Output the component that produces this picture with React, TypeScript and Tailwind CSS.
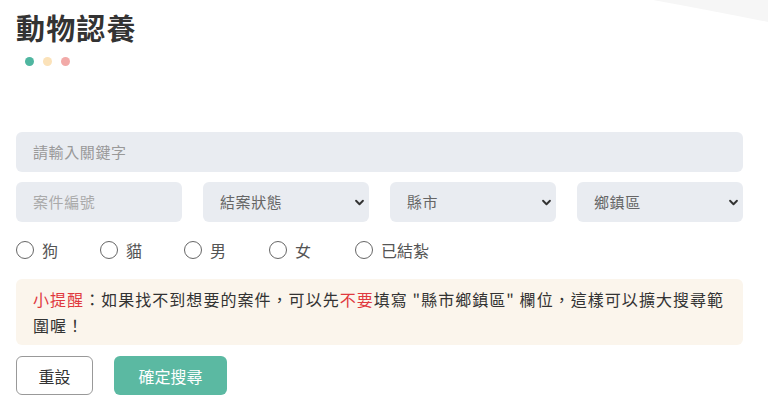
import React from "react";

const font = { fontFamily: '"Noto Sans CJK TC", "Noto Sans", sans-serif' };

function Chevron() {
  return (
    <svg width="11" height="11" viewBox="0 0 16 16" className="shrink-0">
      <path d="M3 5.5l5 5 5-5" fill="none" stroke="#333" strokeWidth="2.8" strokeLinecap="round" strokeLinejoin="round" />
    </svg>
  );
}

function SelectBox({ label }: { label: string }) {
  return (
    <div className="h-[40px] rounded-[6px] bg-[#e9ecf1] flex items-center justify-between pl-[17px] pr-[4px]">
      <span className="text-[15px] text-[#666] tracking-[0.04em]">{label}</span>
      <Chevron />
    </div>
  );
}

function Radio({ label }: { label: string }) {
  return (
    <label className="flex items-center gap-[8px]">
      <span className="w-[18px] h-[18px] rounded-full border-[1.5px] border-[#666] bg-white" />
      <span className="text-[16px] text-[#555]">{label}</span>
    </label>
  );
}

export default function App() {
  return (
    <div className="relative w-[768px] h-[411px] bg-white overflow-hidden" style={font}>
      <svg className="absolute top-0 right-0" width="115" height="26" viewBox="0 0 115 26">
        <path d="M0 0 Q55 10 115 22 L115 0 Z" fill="#f6f6f6" />
      </svg>
      <div className="relative px-[16px] pt-[8px]">
        <h1 className="text-[29px] font-bold text-[#333] leading-[38px] tracking-[0.04em]">動物認養</h1>
        <div className="flex gap-[9px] mt-[11px] pl-[9px]">
          <span className="w-[9px] h-[9px] rounded-full bg-[#4fb6a0]" />
          <span className="w-[9px] h-[9px] rounded-full bg-[#fbe2b9]" />
          <span className="w-[9px] h-[9px] rounded-full bg-[#f2aaa8]" />
        </div>

        <div className="mt-[66px] w-[727px] h-[40px] rounded-[6px] bg-[#e9ecf1] flex items-center pl-[17px]">
          <span className="text-[15px] text-[#999] tracking-[0.04em]">請輸入關鍵字</span>
        </div>

        <div className="mt-[10px] grid grid-cols-4 gap-[21px] w-[727px]">
          <div className="h-[40px] rounded-[6px] bg-[#e9ecf1] flex items-center pl-[17px]">
            <span className="text-[15px] text-[#aaa] tracking-[0.04em]">案件編號</span>
          </div>
          <SelectBox label="結案狀態" />
          <SelectBox label="縣市" />
          <SelectBox label="鄉鎮區" />
        </div>

        <div className="mt-[17px] flex items-center h-[22px]">
          <div className="w-[84px]"><Radio label="狗" /></div>
          <div className="w-[84px]"><Radio label="貓" /></div>
          <div className="w-[85px]"><Radio label="男" /></div>
          <div className="w-[86px]"><Radio label="女" /></div>
          <div><Radio label="已結紮" /></div>
        </div>

        <div className="mt-[18px] w-[727px] rounded-[6px] bg-[#fbf5ec] px-[17px] py-[7px] text-[16px] leading-[26px] text-[#333] tracking-[0.065em]">
          <span className="text-[#e0393e]">小提醒</span>：如果找不到想要的案件，可以先<span className="text-[#e0393e]">不要</span>填寫 "縣市鄉鎮區" 欄位，這樣可以擴大搜尋範圍喔！
        </div>

        <div className="mt-[11px] flex gap-[21px]">
          <button className="w-[77px] h-[39px] rounded-[6px] border border-[#999] bg-white text-[16px] text-[#333]">重設</button>
          <button className="w-[113px] h-[39px] rounded-[6px] bg-[#5bb9a2] text-[16px] text-white">確定搜尋</button>
        </div>
      </div>
    </div>
  );
}
